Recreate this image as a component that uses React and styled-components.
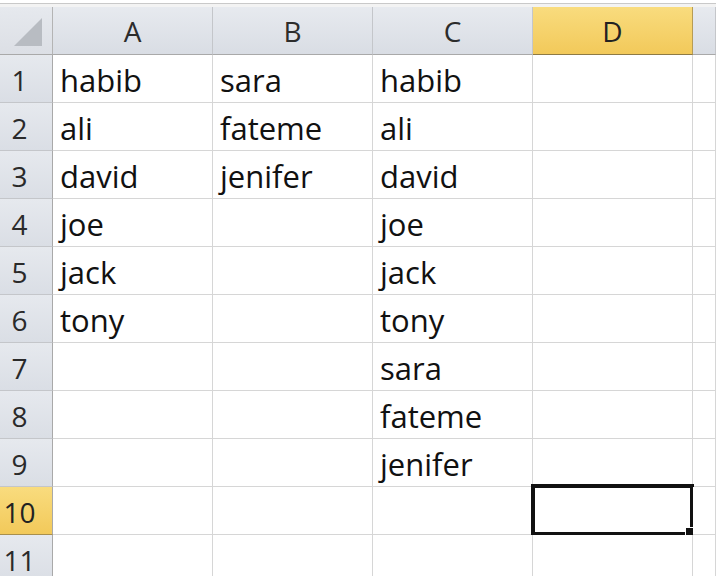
import React from "react";
import styled, { createGlobalStyle, css } from "styled-components";

const GlobalStyle = createGlobalStyle`
  body {
    margin: 0;
    background: #ffffff;
    font-family: "Open Sans", "Liberation Sans", sans-serif;
  }
`;

const Page = styled.div`
  width: 716px;
  height: 576px;
  overflow: hidden;
  display: flex;
  flex-direction: column;
`;

const TopStrip = styled.div`
  height: 7px;
  flex: none;
  background: linear-gradient(#ffffff 0 3px, #c9c9c9 3px 4px, #f3f3f3 4px);
`;

const Sheet = styled.div`
  display: grid;
  grid-template-columns: 53px repeat(4, 160px) 1fr;
  grid-auto-rows: 48px;
`;

const selectedHead = css`
  background: linear-gradient(#f9dc7e, #f2c95a);
  color: #222;
`;

const Corner = styled.div`
  background: linear-gradient(#e6e9ee, #dcdfe5);
  border-right: 1px solid #b4b4b4;
  border-bottom: 1px solid #a9a9a9;
  display: flex;
  align-items: flex-end;
  justify-content: flex-end;
  padding: 0 10px 8px 0;
`;

const ColHead = styled.div`
  background: linear-gradient(#e7eaef, #d9dde4);
  border-right: 1px solid ${(p) => (p.$selected ? "#b79c55" : "#c4c6ca")};
  border-bottom: 1px solid ${(p) => (p.$selected ? "#8e7a44" : "#a9a9a9")};
  display: flex;
  align-items: center;
  justify-content: center;
  font-size: 28px;
  color: #2c2c2c;
  ${(p) => p.$selected && selectedHead}
`;

const RowHead = styled.div`
  background: linear-gradient(#e6e9ee, #dadee5);
  border-right: 1px solid #a9a9a9;
  border-bottom: 1px solid ${(p) => (p.$selected ? "#a88f4d" : "#c4c6ca")};
  display: flex;
  align-items: center;
  justify-content: center;
  padding: 3px 13px 0 0;
  font-size: 28px;
  color: #2a2a2a;
  ${(p) => p.$selected && selectedHead}
`;

const Cell = styled.div`
  position: relative;
  background: #ffffff;
  border-right: 1px solid #d6d6d6;
  border-bottom: 1px solid #d6d6d6;
  display: flex;
  align-items: center;
  padding: 2px 0 0 7px;
  font-size: 31px;
  color: #111;
  white-space: nowrap;
`;

const Selection = styled.div`
  position: absolute;
  inset: -3px -2px -2px -2px;
  border: 4px solid #111;
  pointer-events: none;
`;

const FillHandle = styled.div`
  position: absolute;
  right: -5px;
  bottom: -5px;
  width: 8px;
  height: 8px;
  background: #111;
  border: 1px solid #fff;
`;

const columns = ["A", "B", "C", "D", ""];

const data = [
  ["habib", "sara", "habib"],
  ["ali", "fateme", "ali"],
  ["david", "jenifer", "david"],
  ["joe", "", "joe"],
  ["jack", "", "jack"],
  ["tony", "", "tony"],
  ["", "", "sara"],
  ["", "", "fateme"],
  ["", "", "jenifer"],
  ["", "", ""],
  ["", "", ""],
];

function CornerTriangle() {
  return (
    <svg width="28" height="28" viewBox="0 0 28 28">
      <polygon points="28,0 28,28 0,28" fill="#b8bcc2" />
    </svg>
  );
}

export default function App() {
  return (
    <Page>
      <GlobalStyle />
      <TopStrip />
      <Sheet>
        <Corner>
          <CornerTriangle />
        </Corner>
        {columns.map((c, i) => (
          <ColHead key={i} $selected={c === "D"}>
            {c}
          </ColHead>
        ))}
        {data.map((row, r) => (
          <React.Fragment key={r}>
            <RowHead $selected={r === 9}>{r + 1}</RowHead>
            {[0, 1, 2, 3, 4].map((c) => (
              <Cell key={c}>
                {row[c] || ""}
                {r === 9 && c === 3 && (
                  <Selection>
                    <FillHandle />
                  </Selection>
                )}
              </Cell>
            ))}
          </React.Fragment>
        ))}
      </Sheet>
    </Page>
  );
}
